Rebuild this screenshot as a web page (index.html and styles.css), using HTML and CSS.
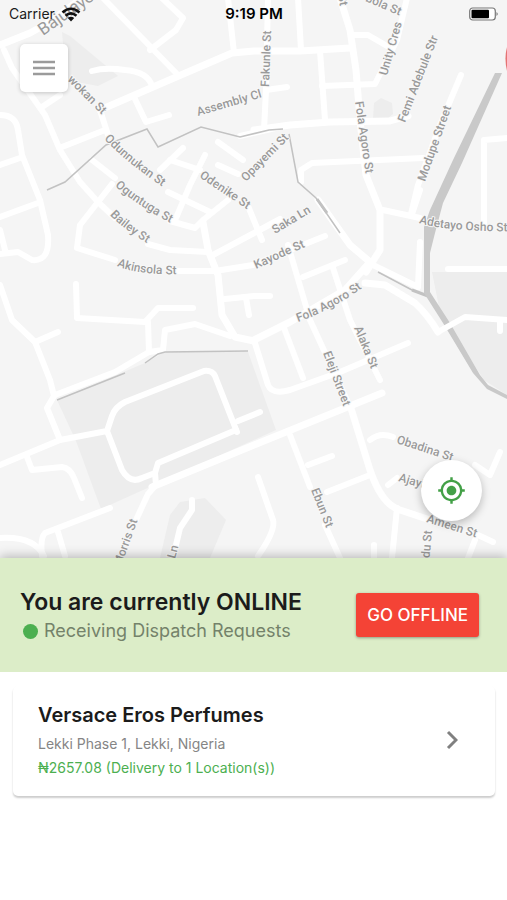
FILE: index.html
```
<!DOCTYPE html>
<html lang="en">
<head>
  <meta charset="UTF-8">
  <meta name="viewport" content="width=device-width, initial-scale=1.0">
  <title>Dispatch</title>
  <link rel="stylesheet" href="styles.css">
</head>
<body>
  <!-- Map -->
  <div class="map">
    <svg class="map-canvas" viewBox="0 0 507 558" role="img" aria-label="Street map">
      <!-- Blocks and parks -->
      <g class="area">
        <path d="M57 400L145 363L165 352H248L276 430L101 509L76 441Z"/>
        <path d="M180 502L205 498L226 520L210 558H160L170 515Z"/>
        <path d="M432 272H507V395L484 380L440 312Z"/>
        <path d="M374 103L381 98L392 103L393 114L386 120L373 119Z"/>
        <path d="M62 32L70 36L118 76L98 86L66 80Z"/>
      </g>

      <!-- Roads -->
      <g class="road wide">
        <path d="M0 45L30 33L50 22L82 -2"/>
        <path d="M340 -2L350 30L356 70L360 120L366 175L380 210V250L366 272"/>
        <path d="M100 110L160 84L232 53L254 51H300L350 48"/>
        <path d="M254 130L290 125L330 122L390 121L408 116"/>
        <path d="M318 200L350 245L370 262L345 290L290 322L254 340"/>
        <path d="M203 222L208 250L218 275L222 315L235 337L254 341"/>
        <path d="M152 487L254 445L382 393"/>
        <path d="M350 405L370 470Q382 505 400 510L430 520"/>
        <path d="M365 283L385 285L415 303Q428 315 438 332"/>
      </g>
      <g class="road">
        <path d="M4 50L12 68L45 115L60 150L80 182L98 202L115 218"/>
        <path d="M103 -2L178 75"/>
        <path d="M162 -2L183 18L176 30L150 50"/>
        <path d="M228 -2L234 53"/>
        <path d="M92 71Q105 67 125 70Q148 72 152 86"/>
        <path d="M134 97L146 122L169 115"/>
        <path d="M100 110L108 135"/>
        <path d="M62 147L105 130"/>
        <path d="M0 115Q16 115 18 130L22 155L40 200L48 235Q50 262 32 260L18 252L0 254"/>
        <path d="M0 165L20 158"/>
        <path d="M0 217L38 203"/>
        <path d="M0 230L5 250"/>
        <path d="M42 107L60 95"/>
        <path d="M218 142L243 160"/>
        <path d="M218 165L238 174"/>
        <path d="M92 160L115 178"/>
        <path d="M98 202L112 184"/>
        <path d="M160 170L183 148"/>
        <path d="M170 160L200 170"/>
        <path d="M205 155L190 185L176 218"/>
        <path d="M298 -2L301 50"/>
        <path d="M320 51L325 120"/>
        <path d="M322 86L375 84L382 70L397 40L407 -2"/>
        <path d="M352 35H368L387 46"/>
        <path d="M268 -2L266 90L264 130"/>
        <path d="M266 90L287 87"/>
        <path d="M301 182V170L312 163L423 158"/>
        <path d="M461 75L440 125L418 185L411 214"/>
        <path d="M484 226V140L507 138"/>
        <path d="M240 136L280 127"/>
        <path d="M98 202L80 225L77 248L115 260"/>
        <path d="M148 244L170 250L208 252"/>
        <path d="M175 271H215L253 265L325 236"/>
        <path d="M170 221L195 228L203 220L228 200"/>
        <path d="M213 255L256 232L280 219"/>
        <path d="M168 192L210 212"/>
        <path d="M76 284L77 318L145 322L158 308H193"/>
        <path d="M148 322L149 352L115 372L55 395"/>
        <path d="M149 352L163 350L165 330L195 324L230 336"/>
        <path d="M225 299L254 296H270"/>
        <path d="M246 298L249 315"/>
        <path d="M0 285L12 320L35 342L50 380L54 396L47 408L60 440"/>
        <path d="M35 342L58 332"/>
        <path d="M383 210L420 218"/>
        <path d="M412 214L420 190"/>
        <path d="M420 242L418 287L373 265"/>
        <path d="M448 269H507"/>
        <path d="M248 206L262 240"/>
        <path d="M288 245L310 320L350 407"/>
        <path d="M303 277L345 260"/>
        <path d="M333 268L350 320L380 380"/>
        <path d="M284 328L303 378"/>
        <path d="M254 340L268 385Q272 395 290 390L340 372L408 343"/>
        <path d="M0 465L60 440L107 431L112 416Q115 407 125 402L204 371Q212 370 215 376L237 432"/>
        <path d="M107 431L122 470Q130 484 142 478L155 473L158 463L236 430M238 421L260 412"/>
        <path d="M155 473L156 485L148 494L136 520"/>
        <path d="M27 457L32 470L62 467Q70 468 74 478L82 498"/>
        <path d="M110 508L45 533Q40 538 42 556"/>
        <path d="M58 532L65 556"/>
        <path d="M0 538Q34 536 44 556"/>
        <path d="M192 500V510L180 528L176 545"/>
        <path d="M290 435L310 487"/>
        <path d="M325 525L340 558"/>
        <path d="M308 465L332 456"/>
        <path d="M327 492L370 475"/>
        <path d="M370 440Q380 432 393 437"/>
        <path d="M258 477L273 520Q276 530 258 556"/>
        <path d="M397 508L392 558"/>
        <path d="M500 452L490 475L475 465"/>
        <path d="M388 485L397 478"/>
        <path d="M478 535L493 542"/>
        <path d="M374 545V558"/>
        <path d="M475 540L468 558"/>
      </g>

      <!-- Boundaries and expressway -->
      <g class="line">
        <path d="M47 190L65 182L106 145L147 129L158 147L201 127L240 137L269 130L283 129M289 134L298 182L316 198L340 233"/>
        <path d="M378 272L412 290L428 296"/>
        <path d="M57 400L125 373"/>
        <path d="M145 363L158 354L165 352L248 351"/>
      </g>
      <path class="line bold" d="M317 199L327 213M412 290L428 296"/>
      <path class="expressway" d="M495 73H502L462 163L443 203L435 233L430 253V292L450 323L480 375L488 385L507 395V399L487 389L473 373L443 323L424 293V227L430 210L453 160Z"/>
      <g class="road">
        <path d="M438 332L465 317L507 320"/>
        <path d="M500 320V331"/>
      </g>
      <path class="marker" d="M507 47Q504 58 507 71Z"/>

      <!-- Street names -->
      <defs>
        <path id="n1" d="M43 36L105 -8"/>
        <path id="n2" d="M67 80L110 123"/>
        <path id="n3" d="M104 139Q130 166 172 193"/>
        <path id="n4" d="M115 186Q140 208 182 229"/>
        <path id="n5" d="M110 215Q125 231 160 251"/>
        <path id="n6" d="M117 266Q140 276 190 274"/>
        <path id="n7" d="M198 116L280 92"/>
        <path id="n8" d="M269 87L272 10"/>
        <path id="n9" d="M246 182L300 127"/>
        <path id="n10" d="M199 177L260 218"/>
        <path id="n11" d="M365 1L410 20"/>
        <path id="n12" d="M338 -5L343 25"/>
        <path id="n13" d="M387 76L407 5"/>
        <path id="n14" d="M405 123L445 20"/>
        <path id="n15" d="M355 102L368 190"/>
        <path id="n16" d="M425 182L460 83"/>
        <path id="n17" d="M275 234L325 204"/>
        <path id="n18" d="M256 269L325 238"/>
        <path id="n19" d="M298 322Q340 307 375 278"/>
        <path id="n20" d="M419 223Q450 233 540 231"/>
        <path id="n21" d="M354 328L378 386"/>
        <path id="n22" d="M323 353L350 424"/>
        <path id="n23" d="M396 443L470 467"/>
        <path id="n24" d="M398 481L440 493"/>
        <path id="n25" d="M426 522L490 542"/>
        <path id="n26" d="M311 490L332 543"/>
        <path id="n27" d="M121 567L143 505"/>
        <path id="n28" d="M175 559L183 530"/>
        <path id="n29" d="M429 565L434 510"/>
      </defs>
      <g class="street">
        <text class="large"><textPath href="#n1">Bajulaye</textPath></text>
        <text><textPath href="#n2">wokan St</textPath></text>
        <text><textPath href="#n3">Odunnukan St</textPath></text>
        <text><textPath href="#n4">Oguntuga St</textPath></text>
        <text><textPath href="#n5">Bailey St</textPath></text>
        <text><textPath href="#n6">Akinsola St</textPath></text>
        <text><textPath href="#n7">Assembly Cl</textPath></text>
        <text><textPath href="#n8">Fakunle St</textPath></text>
        <text><textPath href="#n9">Opayemi St</textPath></text>
        <text><textPath href="#n10">Odenike St</textPath></text>
        <text><textPath href="#n11">bola St</textPath></text>
        <text><textPath href="#n12">St</textPath></text>
        <text><textPath href="#n13">Unity Cres</textPath></text>
        <text><textPath href="#n14">Femi Adebule Str</textPath></text>
        <text><textPath href="#n15">Fola Agoro St</textPath></text>
        <text><textPath href="#n16">Modupe Street</textPath></text>
        <text><textPath href="#n17">Saka Ln</textPath></text>
        <text><textPath href="#n18">Kayode St</textPath></text>
        <text><textPath href="#n19">Fola Agoro St</textPath></text>
        <text><textPath href="#n20">Adetayo Osho St</textPath></text>
        <text><textPath href="#n21">Alaka St</textPath></text>
        <text><textPath href="#n22">Eleji Street</textPath></text>
        <text><textPath href="#n23">Obadina St</textPath></text>
        <text><textPath href="#n24">Ajayi</textPath></text>
        <text><textPath href="#n25">Ameen St</textPath></text>
        <text><textPath href="#n26">Ebun St</textPath></text>
        <text><textPath href="#n27">Morris St</textPath></text>
        <text><textPath href="#n28">Ln</textPath></text>
        <text><textPath href="#n29">ndu St</textPath></text>
      </g>
    </svg>

    <!-- Status Bar -->
    <div class="status-bar">
      <div class="carrier">
        <span>Carrier</span>
        <svg width="20" height="15" viewBox="0 0 20 15" aria-hidden="true">
          <g fill="none" stroke="#111" stroke-width="2.6">
            <path d="M1.5 5.5Q10 -2 18.500 5.500"/>
            <path d="M4.500 8.700Q10 4 15.500 8.700"/>
          </g>
          <path fill="#111" d="M6.800 11Q10 8.500 13.200 11L10 14.500Z"/>
        </svg>
      </div>
      <div class="clock">9:19 PM</div>
      <div class="battery">
        <svg width="30" height="14" viewBox="0 0 30 14" aria-hidden="true">
          <rect x="0.700" y="1" width="25.600" height="12" rx="3" fill="#fff" stroke="#777" stroke-width="1.200"/>
          <rect x="2.500" y="2.800" width="17.500" height="8.400" rx="1" fill="#000"/>
          <path d="M27.500 5Q30 7 27.500 9Z" fill="#777"/>
        </svg>
      </div>
    </div>

    <button class="menu-button" type="button" aria-label="Menu">
      <svg width="22" height="16" viewBox="0 0 22 16" aria-hidden="true">
        <path d="M0 2H22M0 8H22M0 14H22" stroke="#9b9b9b" stroke-width="2.400"/>
      </svg>
    </button>

    <button class="locate-button" type="button" aria-label="My location">
      <svg width="29" height="29" viewBox="0 0 24 24" aria-hidden="true">
        <path fill="#43a047" d="M12 8c-2.210 0-4 1.790-4 4s1.790 4 4 4 4-1.790 4-4-1.790-4-4-4zm8.940 3A8.994 8.994 0 0 0 13 3.060V1h-2v2.060A8.994 8.994 0 0 0 3.060 11H1v2h2.060A8.994 8.994 0 0 0 11 20.940V23h2v-2.060A8.994 8.994 0 0 0 20.940 13H23v-2h-2.060zM12 19c-3.870 0-7-3.130-7-7s3.130-7 7-7 7 3.130 7 7-3.130 7-7 7z"/>
      </svg>
    </button>
  </div>

  <!-- Online Status -->
  <div class="status-panel">
    <div>
      <h1 class="status-title">You are currently ONLINE</h1>
      <p class="status-text"><span class="dot"></span>Receiving Dispatch Requests</p>
    </div>
    <button class="offline-button" type="button">GO OFFLINE</button>
  </div>

  <!-- Requests -->
  <div class="requests">
    <a class="request-card" href="#">
      <div>
        <h2 class="request-name">Versace Eros Perfumes</h2>
        <p class="request-place">Lekki Phase 1, Lekki, Nigeria</p>
        <p class="request-price">₦2657.08 (Delivery to 1 Location(s))</p>
      </div>
      <svg width="12" height="20" viewBox="0 0 12 20" aria-hidden="true">
        <path d="M2 2L10 10L2 18" fill="none" stroke="#808080" stroke-width="3"/>
      </svg>
    </a>
  </div>
</body>
</html>
```
FILE: styles.css
```
/* General Styles */
* {
  box-sizing: border-box;
}

body {
  margin: 0;
  min-height: 100vh;
  display: flex;
  flex-direction: column;
  background: #fff;
  font-family: Inter, Roboto, sans-serif;
  color: #1b1b1b;
}

h1,
h2,
p {
  margin: 0;
}

button {
  border: none;
  padding: 0;
  font-family: inherit;
  cursor: pointer;
}

/* Map */
.map {
  position: relative;
  overflow: hidden;
  background: #f5f5f5;
}

.map-canvas {
  display: block;
  width: 100%;
  height: auto;
}

.area {
  fill: #ededed;
}

.road {
  fill: none;
  stroke: #fff;
  stroke-width: 6;
  stroke-linecap: round;
  stroke-linejoin: round;
}

.road.wide {
  stroke-width: 7;
}

.line {
  fill: none;
  stroke: #c2c2c2;
  stroke-width: 1.5;
}

.line.bold {
  stroke-width: 3;
}

.expressway {
  fill: #c9c9c9;
}

.marker {
  fill: #e57373;
}

.street text {
  font-family: Roboto, sans-serif;
  font-size: 12px;
  font-weight: 500;
  fill: #9a9a9a;
  stroke: #f8f8f8;
  stroke-width: 2;
  stroke-linejoin: round;
  paint-order: stroke;
}

.street .large {
  font-size: 17px;
  font-weight: 400;
}

/* Status Bar */
.status-bar {
  position: absolute;
  top: 0;
  left: 0;
  width: 100%;
  height: 28px;
  padding: 0 8px 0 9px;
  display: grid;
  grid-template-columns: 1fr auto 1fr;
  align-items: center;
  font-size: 14px;
  line-height: 20px;
}

.carrier {
  display: flex;
  align-items: center;
  gap: 6px;
}

.clock {
  font-size: 15px;
  font-weight: 600;
  color: #000;
}

.battery {
  display: flex;
  justify-content: flex-end;
}

/* Map Buttons */
.menu-button,
.locate-button {
  position: absolute;
  display: flex;
  align-items: center;
  justify-content: center;
  background: #fff;
}

.menu-button {
  top: 44px;
  left: 20px;
  width: 48px;
  height: 48px;
  border-radius: 5px;
  box-shadow: 0 1px 4px rgba(0, 0, 0, 0.2);
}

.locate-button {
  right: 25px;
  bottom: 37px;
  width: 61px;
  height: 61px;
  border-radius: 50%;
  box-shadow: 0 3px 8px rgba(0, 0, 0, 0.25);
}

/* Online Status */
.status-panel {
  position: relative;
  display: flex;
  align-items: center;
  justify-content: space-between;
  padding: 28px 28px 28px 20px;
  background: #dcedc8;
  box-shadow: 0 -2px 10px rgba(0, 0, 0, 0.25);
}

.status-title {
  font-size: 23px;
  line-height: 32px;
  font-weight: 600;
}

.status-text {
  display: flex;
  align-items: center;
  gap: 6px;
  padding-left: 3px;
  font-size: 18px;
  line-height: 26px;
  color: #74826a;
}

.dot {
  width: 15px;
  height: 15px;
  border-radius: 50%;
  background: #4caf50;
}

.offline-button {
  height: 44px;
  padding: 0 11px;
  border-radius: 3px;
  background: #f44336;
  box-shadow: 0 1px 3px rgba(0, 0, 0, 0.35);
  color: #fff;
  font-size: 17px;
  font-weight: 500;
}

/* Requests */
.requests {
  position: relative;
  flex: 1;
  padding: 14px 12px 14px 13px;
  background: #fff;
}

.request-card {
  display: flex;
  align-items: center;
  justify-content: space-between;
  padding: 14px 37px 16px 25px;
  border-radius: 5px;
  background: #fff;
  box-shadow: 0 2px 2px rgba(0, 0, 0, 0.2);
  color: inherit;
  text-decoration: none;
}

.request-name {
  font-size: 20px;
  line-height: 30px;
  font-weight: 600;
}

.request-place,
.request-price {
  font-size: 14px;
  line-height: 24px;
}

.request-place {
  padding-top: 2px;
  color: #858585;
}

.request-price {
  color: #4caf50;
}
```
